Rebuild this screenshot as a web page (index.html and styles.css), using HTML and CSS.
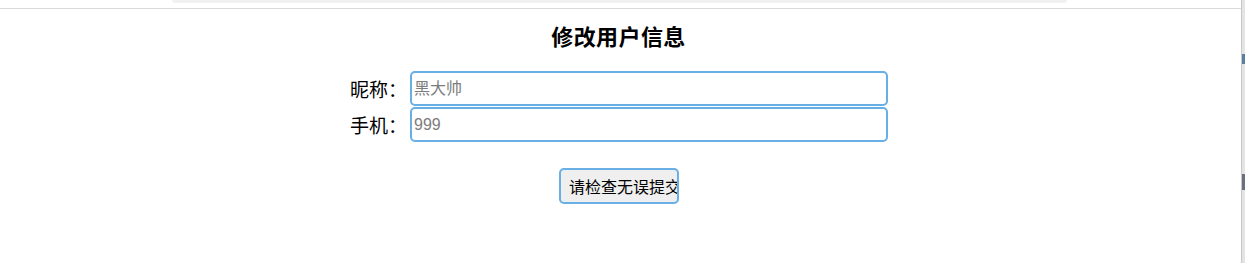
FILE: index.html
```html
<!DOCTYPE html>
<html lang="zh">
<head>
<meta charset="utf-8">
<title>修改用户信息</title>
<link rel="stylesheet" href="styles.css">
</head>
<body>
<div class="page">
  <div class="main">
    <div class="topbar"><div class="topbar-tab"></div></div>
    <div class="content">
      <h2 class="title">修改用户信息</h2>
      <form class="form">
        <div class="row">
          <label class="label">昵称：</label>
          <input class="input" type="text" placeholder="黑大帅">
        </div>
        <div class="row">
          <label class="label">手机：</label>
          <input class="input" type="text" placeholder="999">
        </div>
        <div class="actions">
          <button class="submit" type="button">请检查无误提交</button>
        </div>
      </form>
    </div>
  </div>
  <div class="side">
    <div class="side-mark side-mark-a"></div>
    <div class="side-mark side-mark-b"></div>
  </div>
</div>
</body>
</html>
```
FILE: styles.css
```css
html, body {
  margin: 0;
  padding: 0;
  background: #ffffff;
}
body {
  font-family: "Noto Sans CJK SC", "Liberation Sans", sans-serif;
  color: #000;
}
.page {
  display: flex;
  width: 1245px;
  height: 263px;
  overflow: hidden;
}
.main {
  width: 1241px;
  display: flex;
  flex-direction: column;
}
.topbar {
  width: 100%;
  height: 8px;
  border-bottom: 1px solid #d9d9d9;
  display: flex;
  justify-content: center;
}
.topbar-tab {
  margin-left: -2px;
  width: 895px;
  height: 3px;
  background: #f1f1f1;
  border-radius: 0 0 4px 4px;
}
.content {
  padding-right: 3px;
  display: flex;
  flex-direction: column;
  align-items: center;
}
.title {
  margin: 11px 0 0 -1px;
  font-size: 22px;
  line-height: 30px;
  font-weight: bold;
  letter-spacing: 0.4px;
}
.form {
  margin-top: 21px;
  display: flex;
  flex-direction: column;
  align-items: center;
  gap: 1px;
}
.row {
  display: flex;
  align-items: center;
  gap: 3px;
}
.label {
  width: 57px;
  font-size: 19px;
  line-height: 35px;
  white-space: nowrap;
}
.input {
  box-sizing: border-box;
  width: 478px;
  height: 35px;
  margin: 0;
  padding: 0 2px;
  border: 2px solid #68afe6;
  border-radius: 5px;
  font-family: "Liberation Sans", "Noto Sans CJK SC", sans-serif;
  font-size: 16px;
  outline: none;
}
.input::placeholder {
  color: #7d7d7d;
}
.actions {
  margin-top: 25px;
  display: flex;
  justify-content: center;
}
.submit {
  box-sizing: border-box;
  width: 120px;
  height: 36px;
  padding: 0 0 0 8px;
  border: 2px solid #68afe6;
  border-radius: 5px;
  background: #efefef;
  font-family: "Noto Sans CJK SC", sans-serif;
  font-size: 16px;
  color: #000;
  text-align: left;
  white-space: nowrap;
  overflow: hidden;
}
.side {
  width: 4px;
  height: 263px;
  background: #e4e4e4;
  border-left: 1px solid #c8c8c8;
  box-sizing: border-box;
  display: flex;
  flex-direction: column;
}
.side-mark {
  width: 3px;
  background: #6b6f80;
}
.side-mark-a {
  margin-top: 54px;
  height: 10px;
  background: #5a7fa0;
}
.side-mark-b {
  margin-top: 110px;
  height: 16px;
}
```
